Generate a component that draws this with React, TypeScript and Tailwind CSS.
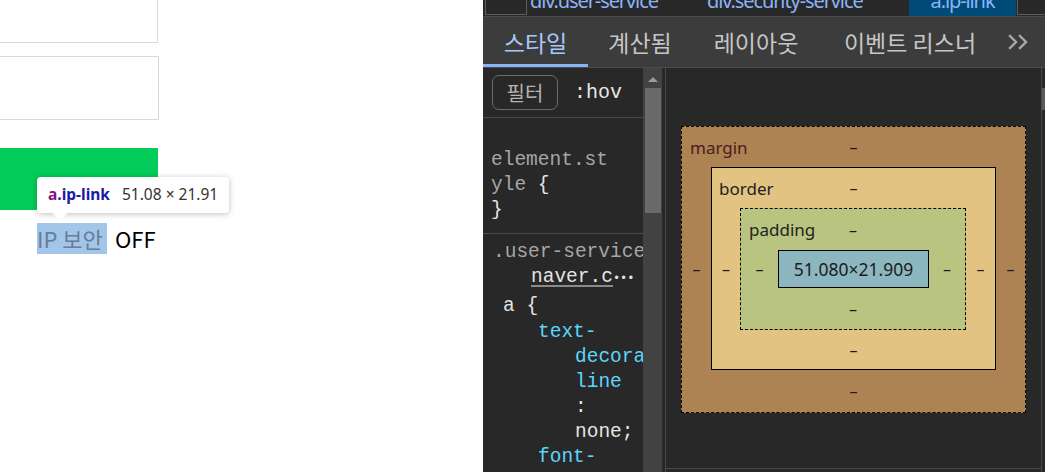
import React from 'react';

const Dash: React.FC = () => <span className="text-[16px] leading-none text-[#1c1c1c]">–</span>;

interface BoxRowProps {
  label: string;
  labelClass: string;
  height: string;
}

// top row of a box-model layer: label at left, dash in the middle
const BoxTop: React.FC<BoxRowProps> = ({ label, labelClass, height }) => (
  <div className={`grid grid-cols-[1fr_auto_1fr] items-center ${height}`}>
    <span className={`text-[17px] leading-none ${labelClass}`}>{label}</span>
    <Dash />
    <span />
  </div>
);

const CodeLine: React.FC<{ className?: string; children: React.ReactNode }> = ({ className = '', children }) => (
  <div className={`h-[25px] leading-[25px] whitespace-nowrap ${className}`}>{children}</div>
);

const App: React.FC = () => {
  return (
    <div className="flex w-[1045px] h-[472px] overflow-hidden font-['Noto_Sans','Noto_Sans_CJK_KR',sans-serif]">
      {/* page */}
      <div className="relative w-[483px] shrink-0 h-full bg-white">
        <div className="w-[158px] h-[43px] border border-t-0 border-l-0 border-[#dadada]" />
        <div className="mt-[13px] w-[159px] h-[64px] border border-l-0 border-[#dadada]" />
        <div className="mt-[28px] w-[158px] h-[62px] bg-[#03cc5a]" />
        <div className="mt-[13px] pl-[37px] flex items-center text-[22px] leading-[31px] font-['Noto_Sans_CJK_KR',sans-serif]">
          <span className="bg-[#a2c5ea] text-[#687d97] w-[70px] h-[31px] whitespace-nowrap">IP 보안</span>
          <span className="ml-[8px] text-black">OFF</span>
        </div>

        {/* inspect tooltip */}
        <div className="absolute left-[37px] top-[177px] w-[192px] h-[36px] bg-white rounded-[4px] shadow-[0_1px_6px_rgba(0,0,0,0.25)] flex items-center px-[11px] text-[15.5px] whitespace-nowrap">
          <span className="font-bold text-[#881280]">a</span>
          <span className="font-bold text-[#1a1aa6]">.ip-link</span>
          <span className="ml-[12px] text-[#333]">51.08 × 21.91</span>
          <div className="absolute left-[15px] top-[35px] w-0 h-0 border-l-[8px] border-r-[8px] border-t-[9px] border-l-transparent border-r-transparent border-t-white" />
        </div>
      </div>

      {/* devtools */}
      <div className="flex-1 min-w-0 flex flex-col bg-[#282828] font-['Noto_Sans','Noto_Sans_CJK_KR',sans-serif]">
        {/* breadcrumb */}
        <div className="h-[17px] shrink-0 flex border-b border-[#4a4a4a] overflow-hidden text-[20px] leading-[20px] tracking-[-1.1px] text-[#8ab4f8] whitespace-nowrap">
          <div className="shrink-0 ml-[2px] w-[42px] h-[15px] border border-t-0 border-[#5e5e5e]" />
          <div className="shrink-0 ml-[3px] w-[149px] -mt-[9px]">div.user-service</div>
          <div className="shrink-0 ml-[28px] w-[188px] -mt-[9px]">div.security-service</div>
          <div className="shrink-0 ml-[14px] w-[107px] bg-[#004a77] flex justify-center">
            <span className="-mt-[9px]">a.ip-link</span>
          </div>
          <div className="ml-[1px] flex-1 h-[15px] border border-t-0 border-r-0 border-[#5e5e5e]" />
        </div>

        {/* tabs */}
        <div className="h-[51px] shrink-0 flex bg-[#3c3c3c] border-b border-[#4a4a4a] text-[23px] text-[#c6c6c6] whitespace-nowrap font-['Noto_Sans_CJK_KR',sans-serif]">
          <div className="w-[105px] flex items-center justify-center pt-[3px] border-b-[3px] border-[#8ab4f8] text-[#a8c7fa]">스타일</div>
          <div className="w-[104px] flex items-center justify-center">계산됨</div>
          <div className="w-[128px] flex items-center justify-center">레이아웃</div>
          <div className="w-[180px] flex items-center justify-center">이벤트 리스너</div>
          <div className="pl-[8px] flex items-center">
            <svg width="22" height="16" viewBox="0 0 22 16" fill="none" stroke="#a8a8a8" strokeWidth="2.4" strokeLinecap="square">
              <path d="M2 2l6 6-6 6" />
              <path d="M12 2l6 6-6 6" />
            </svg>
          </div>
        </div>

        {/* body */}
        <div className="flex-1 flex min-h-0">
          {/* styles pane */}
          <div className="w-[160px] shrink-0 flex flex-col overflow-hidden font-['Liberation_Mono',monospace] text-[19.5px]">
            <div className="h-[50px] shrink-0 flex items-center pl-[9px] border-b border-[#4a4a4a]">
              <div className="w-[66px] h-[35px] border border-[#6b6b6b] rounded-[7px] flex items-center justify-center text-[20px] text-[#b4b4b4] font-['Noto_Sans_CJK_KR',sans-serif]">필터</div>
              <span className="ml-[16px] text-[#e6e6e6] text-[20px]">:hov</span>
            </div>
            <div className="pt-[30px] pb-[10px] pl-[8px] border-b border-[#4a4a4a] text-[#a6a6a6]">
              <CodeLine>element.st</CodeLine>
              <CodeLine>yle <span className="text-[#e4e4e4]">{'{'}</span></CodeLine>
              <CodeLine className="text-[#e4e4e4]">{'}'}</CodeLine>
            </div>
            <div className="pt-[6px] pl-[8px]">
              <CodeLine className="pl-[2px] text-[#a6a6a6] h-[23px] leading-[23px]">.user-service</CodeLine>
              <CodeLine className="pl-[40px] text-[#e4e4e4] h-[27px] leading-[25px]">
                <span className="underline decoration-[#8a8a8a] decoration-2 underline-offset-[3px]">naver.c</span>
                <span className="text-[12px]">•••</span>
              </CodeLine>
              <CodeLine className="pl-[12px] text-[#e4e4e4] h-[28px] leading-[28px]">a {'{'}</CodeLine>
              <CodeLine className="pl-[47px] text-[#5cd5fb]">text-</CodeLine>
              <CodeLine className="pl-[84px] text-[#5cd5fb]">decora</CodeLine>
              <CodeLine className="pl-[84px] text-[#5cd5fb]">line</CodeLine>
              <CodeLine className="pl-[84px] text-[#e4e4e4]">:</CodeLine>
              <CodeLine className="pl-[84px] text-[#e4e4e4]">none;</CodeLine>
              <CodeLine className="pl-[47px] text-[#5cd5fb]">font-</CodeLine>
            </div>
          </div>

          {/* scrollbar */}
          <div className="w-[19px] shrink-0 bg-[#424242] flex flex-col items-center">
            <div className="mt-[9px] w-0 h-0 border-l-[5px] border-r-[5px] border-b-[5px] border-l-transparent border-r-transparent border-b-[#9a9a9a]" />
            <div className="mt-[6px] w-[16px] h-[125px] bg-[#6a6a6a]" />
          </div>
          <div className="w-[3px] shrink-0" />

          {/* box model pane */}
          <div className="flex-1 flex flex-col border-l border-[#4a4a4a]">
            <div className="h-[401px] border-b border-[#4a4a4a] pt-[58px] pl-[15px]">
              <div className="w-[345px] h-[287px] flex flex-col border border-dashed border-black bg-[#ad8354]">
                <BoxTop label="margin" labelClass="pl-[8px] text-[#4a1d1d]" height="h-[40px]" />
                <div className="flex">
                  <div className="w-[29px] flex items-center justify-center"><Dash /></div>
                  <div className="w-[285px] h-[203px] flex flex-col border border-black bg-[#e3c381]">
                    <BoxTop label="border" labelClass="pl-[7px] text-[#222]" height="h-[40px]" />
                    <div className="flex">
                      <div className="w-[28px] flex items-center justify-center"><Dash /></div>
                      <div className="w-[226px] h-[122px] flex flex-col border border-dashed border-black bg-[#b8c47f]">
                        <BoxTop label="padding" labelClass="pl-[8px] text-[#222]" height="h-[41px]" />
                        <div className="flex">
                          <div className="w-[37px] flex items-center justify-center"><Dash /></div>
                          <div className="w-[151px] h-[38px] border border-black bg-[#8cb6c0] flex items-center justify-center text-[17.5px] text-[#1c1c1c]">
                            51.080×21.909
                          </div>
                          <div className="flex-1 flex items-center justify-center"><Dash /></div>
                        </div>
                        <div className="flex-1 flex items-center justify-center"><Dash /></div>
                      </div>
                      <div className="flex-1 flex items-center justify-center"><Dash /></div>
                    </div>
                    <div className="flex-1 flex items-center justify-center"><Dash /></div>
                  </div>
                  <div className="flex-1 flex items-center justify-center"><Dash /></div>
                </div>
                <div className="flex-1 flex items-center justify-center"><Dash /></div>
              </div>
            </div>
          </div>

          {/* thin right scrollbar */}
          <div className="w-[4px] shrink-0 border-l border-[#4a4a4a] flex flex-col">
            <div className="mt-[20px] h-[22px] bg-[#5a5a5a]" />
          </div>
        </div>
      </div>
    </div>
  );
};

export default App;
